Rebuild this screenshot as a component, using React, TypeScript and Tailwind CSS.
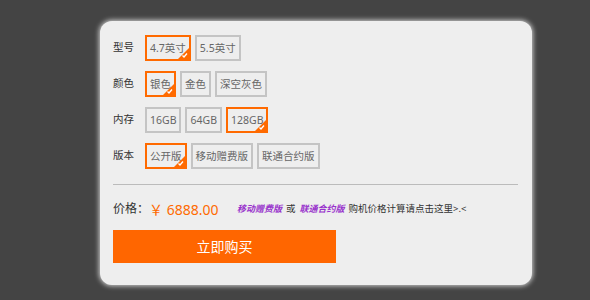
import { useState } from 'react'

const rows = [
  { label: '型号', options: ['4.7英寸', '5.5英寸'] },
  { label: '颜色', options: ['银色', '金色', '深空灰色'] },
  { label: '内存', options: ['16GB', '64GB', '128GB'] },
  { label: '版本', options: ['公开版', '移动赠费版', '联通合约版'] },
]

const initial = [0, 0, 2, 0]

function Option({ text, active, onClick }: { text: string; active: boolean; onClick: () => void }) {
  return (
    <button
      onClick={onClick}
      className={`relative h-[26px] px-[3px] border-2 text-[10.5px] leading-none text-[#666] bg-[#eee] overflow-hidden ${
        active ? 'border-[#ff6a00]' : 'border-[#c4c4c4]'
      }`}
    >
      {text}
      {active && (
        <svg className="absolute right-0 bottom-0" width="11" height="11" viewBox="0 0 11 11">
          <polygon points="11,0 11,11 0,11" fill="#ff6a00" />
          <path d="M4.5 7.5 L6 9 L9 5.5" stroke="#fff" strokeWidth="1.3" fill="none" />
        </svg>
      )}
    </button>
  )
}

export default function App() {
  const [selected, setSelected] = useState(initial)

  return (
    <div
      className="w-[590px] h-[300px] bg-[#444] pt-[21px] pl-[100px]"
      style={{ fontFamily: '"Noto Sans", "Noto Sans CJK SC", sans-serif' }}
    >
      <div className="w-[432px] h-[264px] bg-[#eee] rounded-[12px] shadow-[0_0_5px_1px_rgba(255,255,255,0.75)] pt-[14px] px-[13px]">
        <div className="flex flex-col gap-[10px]">
          {rows.map((row, i) => (
            <div key={row.label} className="flex items-center">
              <span className="w-[32px] text-[10.5px] text-[#333]">{row.label}</span>
              <div className="flex gap-[4px]">
                {row.options.map((opt, j) => (
                  <Option
                    key={opt}
                    text={opt}
                    active={selected[i] === j}
                    onClick={() => setSelected(s => s.map((v, k) => (k === i ? j : v)))}
                  />
                ))}
              </div>
            </div>
          ))}
        </div>

        <div className="mt-[15px] h-px w-[405px] bg-[#bbb]" />

        <div className="flex items-center h-[24px] mt-[12px]">
          <span className="text-[12px] text-[#333] w-[36px]">价格：</span>
          <span className="text-[14px] text-[#ff6a00] w-[88px]">￥ 6888.00</span>
          <span className="text-[9px] font-bold italic text-[#9933cc]">移动赠费版</span>
          <span className="text-[9.5px] text-[#333] mx-[4px]">或</span>
          <span className="text-[9px] font-bold italic text-[#9933cc]">联通合约版</span>
          <span className="text-[9.5px] text-[#333] ml-[4px]">购机价格计算请点击这里&gt;.&lt;</span>
        </div>

        <button className="mt-[9px] w-[223px] h-[33px] bg-[#ff6600] text-white text-[14px]">
          立即购买
        </button>
      </div>
    </div>
  )
}
